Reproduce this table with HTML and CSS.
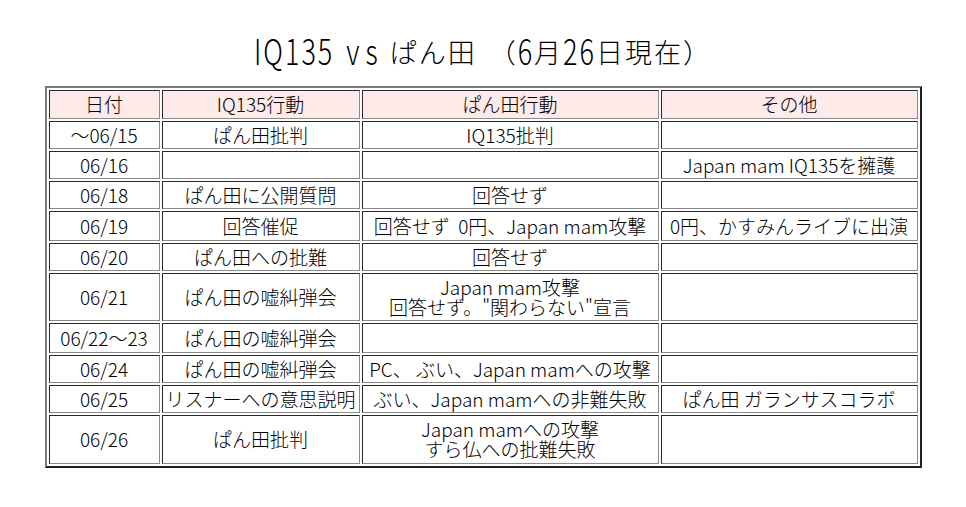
FILE: index.html
```html
<!DOCTYPE html>
<html lang="ja">
<head>
<meta charset="utf-8">
<title>IQ135 vs ぱん田</title>
<link rel="stylesheet" href="styles.css">
</head>
<body>
<h1 class="title"><span class="lat">IQ135</span> <span class="lat vs">vs</span>ぱん田 （<span class="lat">6</span>月<span class="lat">26</span>日現在）</h1>
<table class="timeline">
  <colgroup>
    <col class="c-date"><col class="c-iq"><col class="c-pan"><col class="c-other">
  </colgroup>
  <thead>
    <tr class="head"><th>日付</th><th>IQ135行動</th><th>ぱん田行動</th><th>その他</th></tr>
  </thead>
  <tbody>
    <tr><td>～06/15</td><td>ぱん田批判</td><td>IQ135批判</td><td></td></tr>
    <tr><td>06/16</td><td></td><td></td><td>Japan mam IQ135を擁護</td></tr>
    <tr><td>06/18</td><td>ぱん田に公開質問</td><td>回答せず</td><td></td></tr>
    <tr class="roomy"><td>06/19</td><td>回答催促</td><td>回答せず&nbsp; 0円、Japan mam攻撃</td><td>0円、かすみんライブに出演</td></tr>
    <tr><td>06/20</td><td>ぱん田への批難</td><td>回答せず</td><td></td></tr>
    <tr><td>06/21</td><td>ぱん田の嘘糾弾会</td><td>Japan mam攻撃<br>回答せず。"関わらない"宣言</td><td></td></tr>
    <tr class="roomy"><td>06/22～23</td><td>ぱん田の嘘糾弾会</td><td></td><td></td></tr>
    <tr><td>06/24</td><td>ぱん田の嘘糾弾会</td><td>PC、 ぶい、Japan mamへの攻撃</td><td></td></tr>
    <tr><td>06/25</td><td>リスナーへの意思説明</td><td>ぶい、Japan mamへの非難失敗</td><td>ぱん田 ガランサスコラボ</td></tr>
    <tr class="last"><td>06/26</td><td>ぱん田批判</td><td>Japan mamへの攻撃<br>すら仏への批難失敗</td><td></td></tr>
  </tbody>
</table>
</body>
</html>
```

FILE: styles.css
```css
html, body {
  margin: 0;
  padding: 0;
  background: #ffffff;
}

body {
  font-family: "Noto Sans CJK JP", "Noto Sans", sans-serif;
  font-weight: 300;
  color: #000000;
}

.title {
  margin: 0 0 15px;
  padding-top: 33px;
  height: 38px;
  overflow: visible;
  font-size: 27px;
  line-height: 38px;
  font-weight: 300;
  text-align: center;
  letter-spacing: 2px;
  word-spacing: 4px;
  white-space: nowrap;
}

.title .lat {
  display: inline-block;
  transform: scaleY(1.3);
  transform-origin: 50% 64%;
}

.title .vs {
  letter-spacing: 6px;
  margin-right: 6px;
}

.timeline {
  margin: 0 auto;
  width: 877px;
  table-layout: fixed;
  border-collapse: separate;
  border-spacing: 2px;
  border: 2px solid;
  border-color: #7a7a7a #202020 #202020 #7a7a7a;
}

.c-date { width: 111px; }
.c-iq { width: 198px; }
.c-pan { width: 297px; }
.c-other { width: 257px; }

.timeline th,
.timeline td {
  border: 1px solid;
  border-color: #2a2a2a #8a8a8a #8a8a8a #2a2a2a;
  padding: 3px 0 3px;
  height: 20px;
  font-size: 19px;
  line-height: 20px;
  font-weight: 300;
  text-align: center;
  white-space: nowrap;
  overflow: hidden;
}

.timeline th {
  background: #ffeaea;
}

.timeline .head th {
  padding-bottom: 4px;
}

.timeline .roomy td {
  padding-top: 4px;
  padding-bottom: 4px;
}

.timeline .last td {
  padding-bottom: 4px;
}
```
